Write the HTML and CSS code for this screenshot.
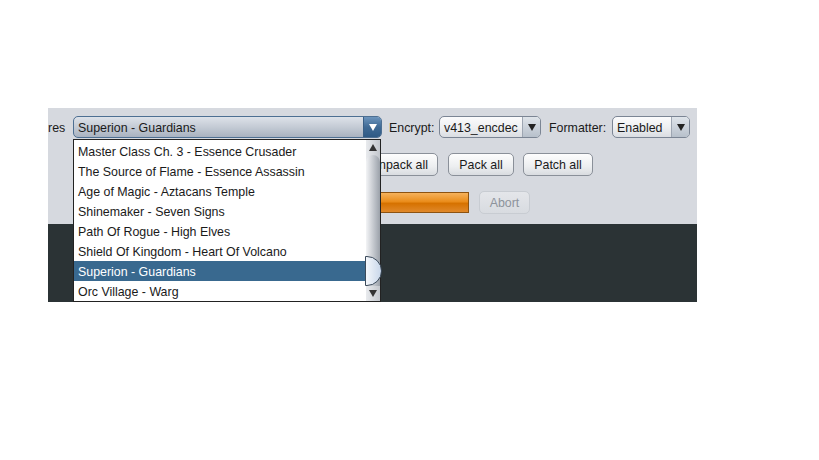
FILE: index.html
```html
<!DOCTYPE html>
<html lang="en">
<head>
    <meta charset="UTF-8">
    <title>Packer</title>
    <link rel="stylesheet" href="styles.css">
</head>
<body>
    <div class="panel">
        <div class="controls">
            <div class="row row-top">
                <span class="label cut">res</span>
                <div class="combo combo-main open">
                    <span class="combo-text">Superion - Guardians</span>
                    <span class="combo-arrow"><span class="tri"></span></span>
                </div>
                <span class="label label-enc">Encrypt:</span>
                <div class="combo combo-enc">
                    <span class="combo-text">v413_encdec</span>
                    <span class="combo-arrow"><span class="tri"></span></span>
                </div>
                <span class="label label-fmt">Formatter:</span>
                <div class="combo combo-fmt">
                    <span class="combo-text">Enabled</span>
                    <span class="combo-arrow"><span class="tri"></span></span>
                </div>
            </div>
            <div class="row row-buttons">
                <button class="btn btn-unpack">Unpack all</button>
                <button class="btn btn-pack">Pack all</button>
                <button class="btn btn-patch">Patch all</button>
            </div>
            <div class="row row-progress">
                <div class="progress"></div>
                <button class="btn btn-abort" disabled>Abort</button>
            </div>
        </div>
        <div class="log"></div>

        <!-- lista aberta do combo principal -->
        <div class="popup">
            <ul class="items">
                <li>Master Class Ch. 3 - Essence Crusader</li>
                <li>The Source of Flame - Essence Assassin</li>
                <li>Age of Magic - Aztacans Temple</li>
                <li>Shinemaker - Seven Signs</li>
                <li>Path Of Rogue - High Elves</li>
                <li>Shield Of Kingdom - Heart Of Volcano</li>
                <li class="selected">Superion - Guardians</li>
                <li>Orc Village - Warg</li>
            </ul>
            <div class="scrollbar">
                <div class="sb-arrow sb-up"></div>
                <div class="sb-track">
                    <div class="sb-thumb"></div>
                </div>
                <div class="sb-arrow sb-down"></div>
            </div>
        </div>
    </div>
</body>
</html>
```

FILE: styles.css
```css
body {
    margin: 0;
    background-color: #ffffff;
    font-family: "Liberation Sans", Arial, sans-serif;
    font-size: 12.4px;
    color: #1a1a1a;
}

.panel {
    position: relative;
    margin: 108px 0 0 48px;
    width: 649px;
}

.controls {
    background-color: #d6d9df;
    height: 116px;
    padding-top: 8px;
    box-sizing: border-box;
}

.log {
    background-color: #2b3335;
    height: 78px;
}

.row {
    display: flex;
    align-items: center;
}

.row-top {
    height: 22px;
}

.label {
    color: #1a1a1a;
    padding-top: 1px;
    white-space: nowrap;
}

.label.cut {
    width: 25px;
}

.label-enc {
    width: 50px;
}

.label-fmt {
    width: 63px;
}

.combo {
    display: flex;
    height: 22px;
    box-sizing: border-box;
    border: 1px solid #7b8594;
    border-radius: 5px;
    background: linear-gradient(#fbfbfc, #eef0f2 50%, #dadde2);
    margin-right: 7px;
    overflow: hidden;
}

.combo-text {
    flex: 1;
    padding: 1px 0 0 4px;
    line-height: 20px;
}

.combo-arrow {
    width: 17px;
    border-left: 1px solid #9ea6b2;
    background: linear-gradient(#dfe4ea, #b7c0cb);
    display: flex;
    align-items: center;
    justify-content: center;
}

.tri {
    width: 0;
    height: 0;
    border-left: 4px solid transparent;
    border-right: 4px solid transparent;
    border-top: 7px solid #222;
}

.combo-main {
    width: 309px;
    border-color: #4d6f92;
    background: linear-gradient(#dde2e9, #c4cbd5 50%, #a9b2c0);
}

.combo-main .combo-arrow {
    border-left-color: #3a5f86;
    background: linear-gradient(#6d95bd, #3f6a95 50%, #2f5a85);
}

.combo-main .tri {
    border-top-color: #ffffff;
}

.combo-enc {
    width: 102px;
    margin-right: 8px;
}

.combo-fmt {
    width: 78px;
    margin-right: 0;
}

.row-buttons {
    margin-top: 15px;
    padding-left: 312px;
    gap: 10px;
}

.btn {
    font-family: "Liberation Sans", Arial, sans-serif;
    font-size: 12.4px;
    color: #1a1a1a;
    height: 23px;
    padding: 1px 0 0;
    border: 1px solid #8a9099;
    border-radius: 5px;
    background: linear-gradient(#fdfdfd, #eceef0 60%, #d9dce0);
}

.btn-unpack {
    width: 78px;
}

.btn-pack {
    width: 66px;
}

.btn-patch {
    width: 70px;
    margin-left: -1px;
}

.row-progress {
    margin-top: 15px;
    padding-left: 190px;
    gap: 10px;
}

.progress {
    width: 231px;
    height: 21px;
    box-sizing: border-box;
    border: 1px solid #8d5311;
    background: linear-gradient(#f6b25c, #ea8d1c 45%, #d67200 55%, #e0882a);
}

.btn-abort {
    width: 51px;
    height: 23px;
    color: #8d939b;
    border-color: #c8ccd2;
    background: linear-gradient(#e4e6ea, #d8dbe0);
}

.popup {
    position: absolute;
    left: 25px;
    top: 31px;
    width: 308px;
    height: 163px;
    box-sizing: border-box;
    border: 1px solid #222;
    background-color: #ffffff;
    padding-top: 1px;
    display: flex;
}

.items {
    list-style: none;
    margin: 0;
    padding: 0;
    flex: 1;
}

.items li {
    height: 19px;
    padding: 1px 0 0 4px;
    line-height: 20px;
    white-space: nowrap;
    overflow: hidden;
}

.items li.selected {
    background-color: #39698f;
    color: #ffffff;
}

.scrollbar {
    width: 14px;
    display: flex;
    flex-direction: column;
    background: linear-gradient(90deg, #e9ebee, #c3c7cd);
    margin-top: -1px;
}

.sb-arrow {
    height: 15px;
    display: flex;
    justify-content: center;
    align-items: center;
}

.sb-up::after {
    content: "";
    border-left: 4px solid transparent;
    border-right: 4px solid transparent;
    border-bottom: 7px solid #333;
}

.sb-down::after {
    content: "";
    border-left: 4px solid transparent;
    border-right: 4px solid transparent;
    border-top: 7px solid #333;
}

.sb-track {
    flex: 1;
    position: relative;
    border-radius: 10px 10px 0 0;
    background: linear-gradient(90deg, #f3f4f6, #b5bac1 70%, #9ba1a9);
}

.sb-thumb {
    position: absolute;
    left: -1px;
    right: -2px;
    bottom: 0;
    height: 30px;
    box-sizing: border-box;
    border: 1px solid #3b4a5a;
    border-radius: 0 15px 15px 0;
    background: linear-gradient(90deg, #f4f7fb, #c9d7ea);
}
```
